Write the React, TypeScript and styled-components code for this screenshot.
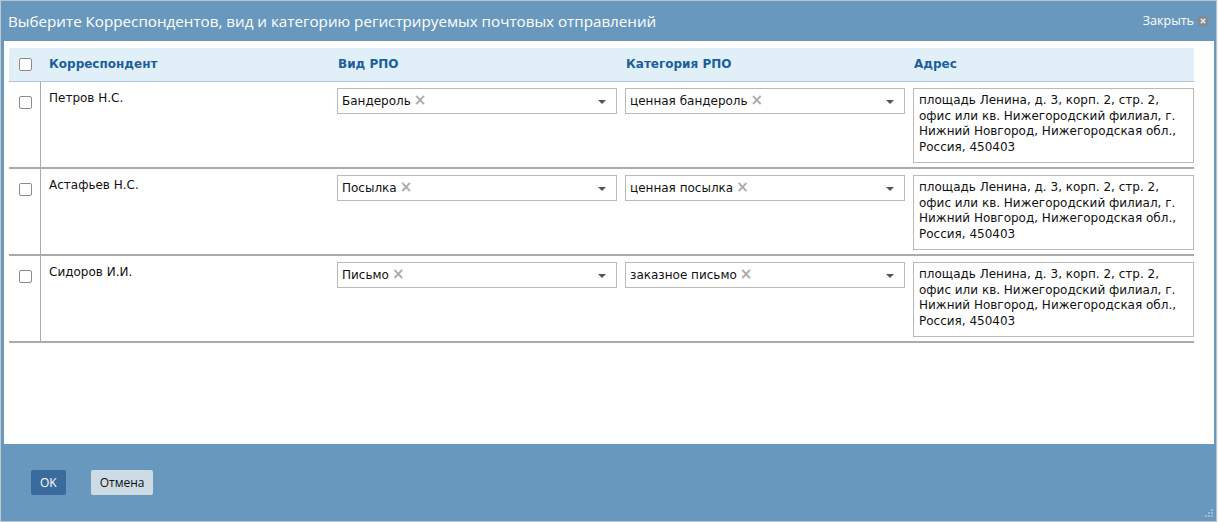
import * as React from 'react';
import styled, { createGlobalStyle } from 'styled-components';

const Blue = '#6898bd';

const GlobalStyle = createGlobalStyle`
  html, body {
    margin: 0;
    padding: 0;
    background: #f3f3f3;
  }
  body {
    font-family: 'DejaVu Sans', Verdana, sans-serif;
    font-size: 12px;
  }
`;

type Row = {
  id: number;
  name: string;
  kind: string;
  category: string;
  address: string;
};

const ADDRESS =
  'площадь Ленина, д. 3, корп. 2, стр. 2, офис или кв. Нижегородский филиал, г. Нижний Новгород, Нижегородская обл., Россия, 450403';

const rows: Row[] = [
  { id: 1, name: 'Петров Н.С.', kind: 'Бандероль', category: 'ценная бандероль', address: ADDRESS },
  { id: 2, name: 'Астафьев Н.С.', kind: 'Посылка', category: 'ценная посылка', address: ADDRESS },
  { id: 3, name: 'Сидоров И.И.', kind: 'Письмо', category: 'заказное письмо', address: ADDRESS },
];

const S = {
  Dialog: styled.div`
    width: 1215px;
    height: 520px;
    border: 1px solid #b7c4ce;
    border-left-color: #c8c8c8;
    background: ${Blue};
    display: flex;
    flex-direction: column;
  `,
  TitleBar: styled.div`
    height: 40px;
    display: flex;
    align-items: center;
    padding: 0 7px 0 7px;
    color: #fff;
  `,
  Title: styled.div`
    flex: 1;
    font-family: 'Open Sans', 'DejaVu Sans', sans-serif;
    font-size: 15.2px;
    margin-top: -1px;
  `,
  Close: styled.div`
    display: flex;
    align-items: center;
    gap: 3px;
    font-family: 'Open Sans', sans-serif;
    font-size: 12.5px;
    margin-top: -1px;
  `,
  CloseIcon: styled.svg`
    flex: 0 0 12px;
    display: block;
  `,
  Content: styled.div`
    height: 403px;
    margin: 0 2px 0 3px;
    background: #fff;
    padding: 7px 20px 0 5px;
    box-sizing: border-box;
  `,
  HeaderRow: styled.div`
    display: grid;
    grid-template-columns: 32px 296px 288px 288px 1fr;
    height: 33px;
    align-items: center;
    background: #e1f0f8;
    border-bottom: 1px solid #b3c5d2;
    border-radius: 2px 2px 0 0;
  `,
  HeaderCell: styled.div<{ $first?: boolean }>`
    padding-left: ${({ $first }) => ($first ? '8px' : '1px')};
    font-weight: bold;
    color: #1b5e9f;
    font-size: 12px;
    margin-top: -1px;
  `,
  CheckCell: styled.div<{ $body?: boolean }>`
    display: flex;
    justify-content: center;
    align-self: stretch;
    align-items: ${({ $body }) => ($body ? 'flex-start' : 'center')};
    padding-top: ${({ $body }) => ($body ? '14px' : '0')};
    border-right: ${({ $body }) => ($body ? '1px solid #ababab' : 'none')};
  `,
  Check: styled.span`
    width: 11px;
    height: 11px;
    border: 1px solid #8c8c8c;
    border-radius: 2px;
    background: #fff;
    margin-left: 1px;
  `,
  BodyRow: styled.div`
    display: grid;
    grid-template-columns: 32px 296px 288px 288px 1fr;
    height: 85px;
    border-bottom: 2px solid #ababab;
  `,
  NameCell: styled.div`
    padding: 9px 0 0 8px;
    color: #111;
    font-size: 12px;
  `,
  SelectCell: styled.div`
    padding-top: 6px;
  `,
  Select: styled.div`
    width: 280px;
    height: 26px;
    box-sizing: border-box;
    border: 1px solid #b9b9b9;
    display: flex;
    align-items: center;
    padding: 0 10px 0 4px;
    color: #111;
    font-size: 12px;
  `,
  Chip: styled.span`
    flex: 1;
    display: flex;
    align-items: center;
    gap: 3px;
  `,
  Remove: styled.span`
    color: #ababab;
    font-size: 15px;
    font-weight: bold;
    line-height: 1;
    margin-top: -1px;
  `,
  Arrow: styled.span`
    width: 0;
    height: 0;
    border-left: 4px solid transparent;
    border-right: 4px solid transparent;
    border-top: 4px solid #555;
    margin-top: 1px;
  `,
  AddressCell: styled.div`
    padding: 6px 0 0 0;
  `,
  Address: styled.div`
    width: 281px;
    height: 75px;
    box-sizing: border-box;
    border: 1px solid #b9b9b9;
    padding: 4px 5px 0 5px;
    line-height: 15.5px;
    color: #111;
    font-size: 12px;
  `,
  Footer: styled.div`
    flex: 1;
    display: flex;
    align-items: center;
    padding: 0 0 0 30px;
    gap: 25px;
    position: relative;
  `,
  Button: styled.button<{ $primary?: boolean }>`
    height: 25px;
    border: none;
    border-radius: 2px;
    padding: 0 9px;
    font-family: 'Open Sans', sans-serif;
    font-size: 12px;
    background: ${({ $primary }) => ($primary ? '#3a6b9e' : '#cddbe5')};
    color: ${({ $primary }) => ($primary ? '#fff' : '#111')};
  `,
  Grip: styled.svg`
    position: absolute;
    right: 3px;
    bottom: 3px;
  `,
};

const Select = ({ value }: { value: string }) => (
  <S.Select>
    <S.Chip>
      {value}
      <S.Remove>×</S.Remove>
    </S.Chip>
    <S.Arrow />
  </S.Select>
);

const App = () => (
  <>
    <GlobalStyle />
    <S.Dialog>
      <S.TitleBar>
        <S.Title>Выберите Корреспондентов, вид и категорию регистрируемых почтовых отправлений</S.Title>
        <S.Close>
          Закрыть
          <S.CloseIcon width="12" height="12" viewBox="0 0 12 12">
            <circle cx="6" cy="6" r="5.5" fill="#85898e" />
            <path d="M3.8 3.8L8.2 8.2M8.2 3.8L3.8 8.2" stroke="#e8e8e8" strokeWidth="1.6" />
          </S.CloseIcon>
        </S.Close>
      </S.TitleBar>

      <S.Content>
        <S.HeaderRow>
          <S.CheckCell>
            <S.Check />
          </S.CheckCell>
          <S.HeaderCell $first>Корреспондент</S.HeaderCell>
          <S.HeaderCell>Вид РПО</S.HeaderCell>
          <S.HeaderCell>Категория РПО</S.HeaderCell>
          <S.HeaderCell>Адрес</S.HeaderCell>
        </S.HeaderRow>
        {rows.map((r) => (
          <S.BodyRow key={r.id}>
            <S.CheckCell $body>
              <S.Check />
            </S.CheckCell>
            <S.NameCell>{r.name}</S.NameCell>
            <S.SelectCell>
              <Select value={r.kind} />
            </S.SelectCell>
            <S.SelectCell>
              <Select value={r.category} />
            </S.SelectCell>
            <S.AddressCell>
              <S.Address>{r.address}</S.Address>
            </S.AddressCell>
          </S.BodyRow>
        ))}
      </S.Content>

      <S.Footer>
        <S.Button $primary>OK</S.Button>
        <S.Button>Отмена</S.Button>
        <S.Grip width="10" height="10" viewBox="0 0 10 10">
          {[
            [8, 0],
            [8, 3],
            [5, 3],
            [8, 6],
            [5, 6],
            [2, 6],
          ].map(([x, y]) => (
            <rect key={`${x}-${y}`} x={x} y={y + 1} width="2" height="2" fill="#9dbbd3" />
          ))}
        </S.Grip>
      </S.Footer>
    </S.Dialog>
  </>
);

export default App;
